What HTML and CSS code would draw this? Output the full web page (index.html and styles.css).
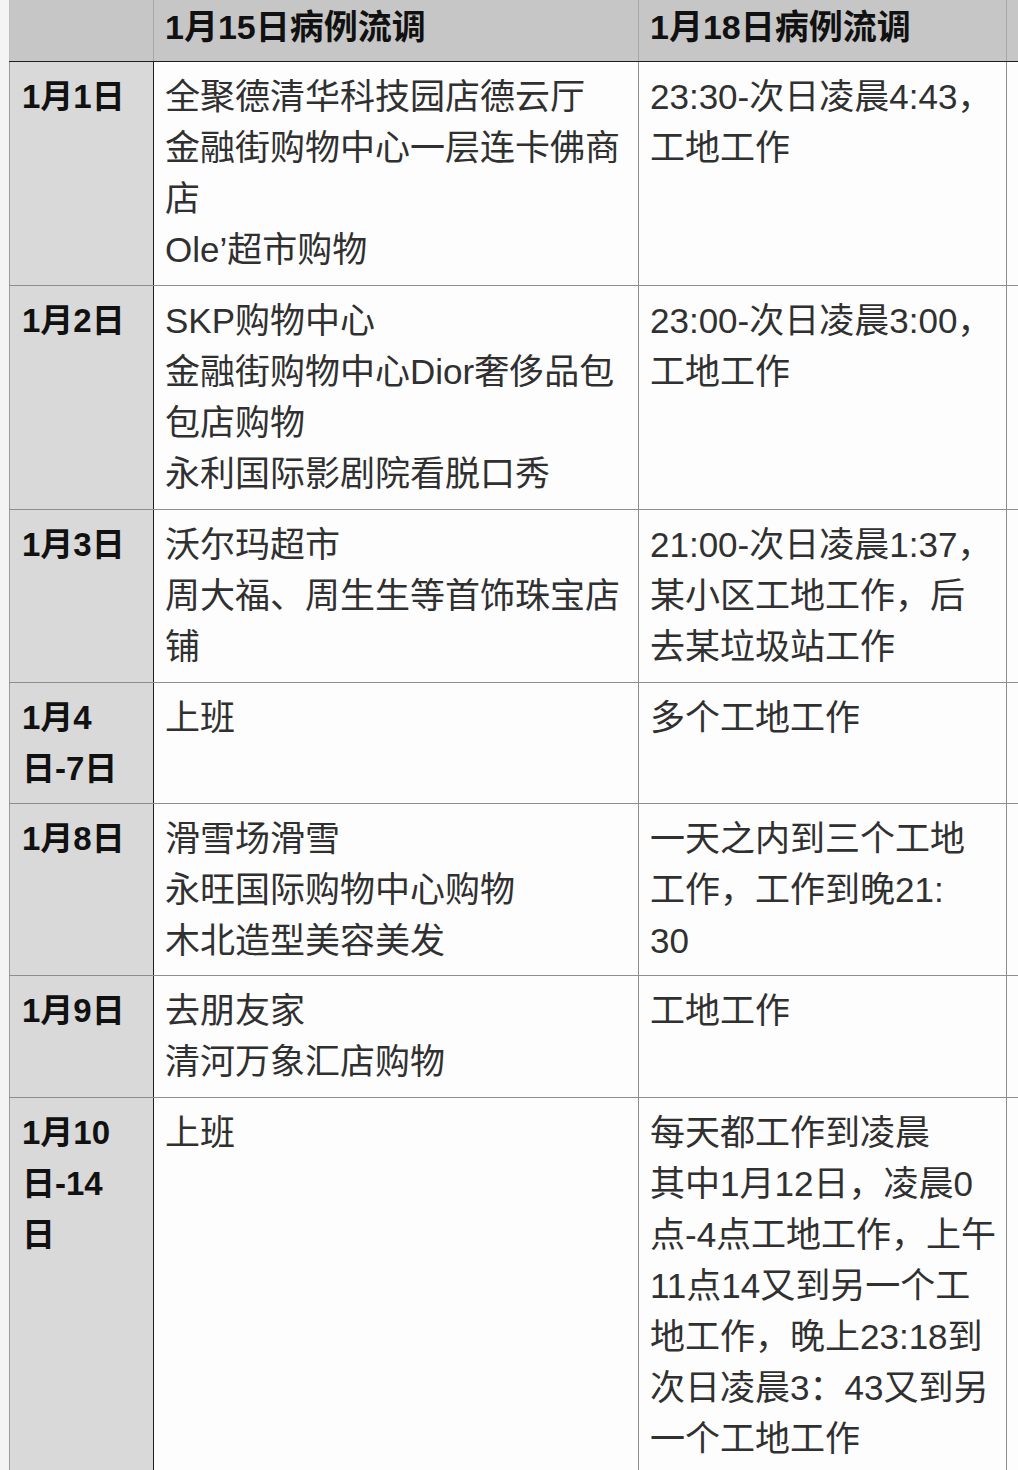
FILE: index.html
```html
<!DOCTYPE html>
<html lang="zh-CN">
<head>
<meta charset="utf-8">
<title>病例流调</title>
<link rel="stylesheet" href="styles.css">
</head>
<body>
<div class="page">
<table class="trace">
  <colgroup>
    <col class="c-date">
    <col class="c-a">
    <col class="c-b">
    <col class="c-x">
  </colgroup>
  <thead>
    <tr>
      <th class="h-date"></th>
      <th>1月15日病例流调</th>
      <th>1月18日病例流调</th>
      <th class="h-x"></th>
    </tr>
  </thead>
  <tbody>
    <tr>
      <td class="date">1月1日</td>
      <td>全聚德清华科技园店德云厅<br>金融街购物中心一层连卡佛商<br>店<br>Ole’超市购物</td>
      <td>23:30-次日凌晨4:43，<br>工地工作</td>
      <td class="x"></td>
    </tr>
    <tr>
      <td class="date">1月2日</td>
      <td>SKP购物中心<br>金融街购物中心Dior奢侈品包<br>包店购物<br>永利国际影剧院看脱口秀</td>
      <td>23:00-次日凌晨3:00，<br>工地工作</td>
      <td class="x"></td>
    </tr>
    <tr>
      <td class="date">1月3日</td>
      <td>沃尔玛超市<br>周大福、周生生等首饰珠宝店<br>铺</td>
      <td>21:00-次日凌晨1:37，<br>某小区工地工作，后<br>去某垃圾站工作</td>
      <td class="x"></td>
    </tr>
    <tr class="short">
      <td class="date">1月4<br>日-7日</td>
      <td>上班</td>
      <td>多个工地工作</td>
      <td class="x"></td>
    </tr>
    <tr class="short">
      <td class="date">1月8日</td>
      <td>滑雪场滑雪<br>永旺国际购物中心购物<br>木北造型美容美发</td>
      <td>一天之内到三个工地<br>工作，工作到晚21:<br>30</td>
      <td class="x"></td>
    </tr>
    <tr>
      <td class="date">1月9日</td>
      <td>去朋友家<br>清河万象汇店购物</td>
      <td>工地工作</td>
      <td class="x"></td>
    </tr>
    <tr>
      <td class="date">1月10<br>日-14<br>日</td>
      <td>上班</td>
      <td>每天都工作到凌晨<br>其中1月12日，凌晨0<br>点-4点工地工作，上午<br>11点14又到另一个工<br>地工作，晚上23:18到<br>次日凌晨3：43又到另<br>一个工地工作</td>
      <td class="x"></td>
    </tr>
  </tbody>
</table>
</div>
</body>
</html>
```

FILE: styles.css
```css
html, body {
  margin: 0;
  padding: 0;
  background: #f4f4f4;
  overflow: hidden;
}

.page {
  width: 1018px;
  height: 1470px;
  overflow: hidden;
  padding-left: 9px;
  box-sizing: border-box;
}

.trace {
  border-collapse: collapse;
  table-layout: fixed;
  width: 1059px;
  font-family: "Liberation Sans", "Noto Sans CJK SC", sans-serif;
  color: #303030;
  background: #fdfdfd;
}

.c-date { width: 144px; }
.c-a { width: 485px; }
.c-b { width: 368px; }
.c-x { width: 62px; }

.trace th {
  background: #c6c6c6;
  color: #111;
  font-size: 34px;
  font-weight: bold;
  line-height: 51px;
  text-align: left;
  padding: 2px 11px 8px 11px;
  border-left: 1px solid #a6a6a6;
  border-bottom: 1px solid #1e1e1e;
  white-space: nowrap;
}

.trace th.h-date {
  border-left: 1px solid #bdbdbd;
}

.trace td {
  vertical-align: top;
  font-size: 35px;
  line-height: 51px;
  padding: 9px 11px 10px 11px;
  border: 1px solid #8e8e8e;
  border-top: none;
  white-space: nowrap;
  background: #fdfdfd;
}

.trace tr.short td {
  padding-bottom: 9px;
}

.trace td.date {
  background: #d9d9d9;
  color: #111;
  font-size: 33px;
  font-weight: bold;
  padding-left: 12px;
  border-left: 1px solid #9a9a9a;
  border-right: 1px solid #1e1e1e;
}

.trace td.x {
  background: #fdfdfd;
}
```
